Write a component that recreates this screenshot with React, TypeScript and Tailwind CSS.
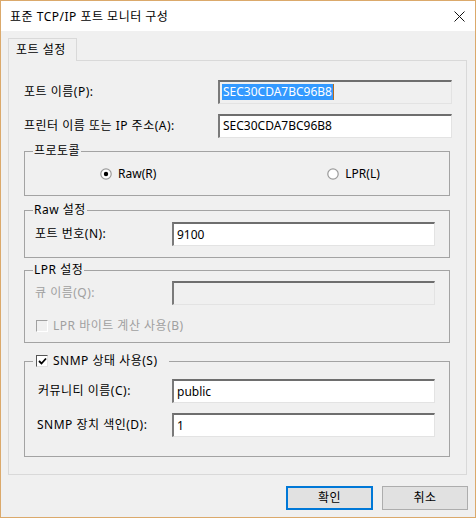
import React from "react";

const font = "font-['Noto_Sans','Noto_Sans_CJK_KR',sans-serif]";
const label = "text-[12px] leading-[16px] tracking-[0.5px]";

function TextBox({
  value,
  width,
  disabled = false,
  selected = false,
}: {
  value?: string;
  width: string;
  disabled?: boolean;
  selected?: boolean;
}) {
  return (
    <div
      className={`${width} h-[24px] flex items-center pl-[2px] border-t-2 border-l-2 border-r border-b border-t-[#6e6e6e] border-l-[#7a7a7a] border-r-[#e3e3e3] border-b-[#e3e3e3] ${
        disabled || selected ? "bg-[#f0f0f0]" : "bg-white"
      }`}
    >
      {value && (
        <span
          className={`text-[12px] leading-[16px] px-[1px] ${
            selected ? "bg-[#3399ff] text-white border-r border-[#b36b1f]" : "text-black"
          }`}
        >
          {value}
        </span>
      )}
    </div>
  );
}

function Radio({ checked }: { checked?: boolean }) {
  return (
    <svg width="12" height="12" viewBox="0 0 12 12">
      <circle cx="6" cy="6" r="5.2" fill="#fff" stroke="#9a9a9a" strokeWidth="1.2" />
      {checked && <circle cx="6" cy="6" r="2.2" fill="#000" />}
    </svg>
  );
}

function Check({ checked, disabled }: { checked?: boolean; disabled?: boolean }) {
  return (
    <div
      className={`w-[12px] h-[12px] flex items-center justify-center border-t border-l border-r border-b ${
        disabled
          ? "bg-[#f0f0f0] border-t-[#a0a0a0] border-l-[#a0a0a0] border-r-white border-b-white"
          : "bg-white border-t-[#555] border-l-[#555] border-r-[#e3e3e3] border-b-[#e3e3e3]"
      }`}
    >
      {checked && (
        <svg width="9" height="8" viewBox="0 0 9 8">
          <polyline points="1,4 3.5,6.5 8,1.5" fill="none" stroke="#000" strokeWidth="1.8" />
        </svg>
      )}
    </div>
  );
}

function Group({
  legend,
  height,
  className = "",
  children,
}: {
  legend: React.ReactNode;
  height: string;
  className?: string;
  children?: React.ReactNode;
}) {
  return (
    <div className={`relative ml-[15px] w-[426px] ${height} border border-[#a3a3a3] ${className}`}>
      <div className={`absolute -top-[9px] left-[8px] px-[1px] bg-[#f0f0f0] flex items-center ${label} text-black`}>
        {legend}
      </div>
      {children}
    </div>
  );
}

export default function App() {
  return (
    <div className={`${font} w-[476px] h-[518px] border border-[#dba96b] bg-[#f0f0f0] flex flex-col text-black`}>
      {/* title bar */}
      <div className="h-[30px] bg-white flex items-center justify-between pl-[9px] pr-[9px]">
        <span className={`${label} mt-[1px]`}>표준 TCP/IP 포트 모니터 구성</span>
        <svg width="11" height="11" viewBox="0 0 11 11" className="mr-[1px]">
          <path d="M0.5 0.5 L10.5 10.5 M10.5 0.5 L0.5 10.5" stroke="#111" strokeWidth="1" />
        </svg>
      </div>

      <div className="px-[7px] pt-[7px]">
        {/* tab header */}
        <div className="relative z-10 w-[69px] h-[23px] border border-b-0 border-[#d9d9d9] bg-[#f0f0f0] flex items-center pl-[7px]">
          <span className={label}>포트 설정</span>
        </div>

        {/* tab panel */}
        <div className="-mt-px w-[459px] h-[415px] border border-[#d9d9d9] flex flex-col">
          <div className="mt-[18px] h-[25px] flex items-center justify-between pl-[15px] pr-[14px]">
            <span className={label}>포트 이름(P):</span>
            <TextBox width="w-[234px]" value="SEC30CDA7BC96B8" selected />
          </div>
          <div className="mt-[9px] h-[25px] flex items-center justify-between pl-[15px] pr-[14px]">
            <span className={label}>프린터 이름 또는 IP 주소(A):</span>
            <TextBox width="w-[234px]" value="SEC30CDA7BC96B8" />
          </div>

          <Group legend="프로토콜" height="h-[45px]" className="mt-[13px]">
            <div className="h-full flex items-center">
              <div className="ml-[75px] flex items-center gap-[6px]">
                <Radio checked />
                <span className="text-[12px] leading-[16px]">Raw(R)</span>
              </div>
              <div className="ml-[171px] flex items-center gap-[6px]">
                <Radio />
                <span className="text-[12px] leading-[16px]">LPR(L)</span>
              </div>
            </div>
          </Group>

          <Group legend="Raw 설정" height="h-[48px]" className="mt-[14px]">
            <div className="mt-[11px] pl-[10px] flex items-center">
              <span className={`w-[137px] ${label}`}>포트 번호(N):</span>
              <TextBox width="w-[263px]" value="9100" />
            </div>
          </Group>

          <Group legend="LPR 설정" height="h-[73px]" className="mt-[12px]">
            <div className="mt-[10px] pl-[10px] flex items-center">
              <span className={`w-[137px] ${label} text-[#a0a0a0]`}>큐 이름(Q):</span>
              <TextBox width="w-[263px]" disabled />
            </div>
            <div className="mt-[13px] pl-[11px] flex items-center gap-[5px]">
              <Check disabled />
              <span className={`${label} text-[#a0a0a0]`}>LPR 바이트 계산 사용(B)</span>
            </div>
          </Group>

          <Group
            legend={
              <div className="flex items-center gap-[5px] pl-[2px] pr-[10px]">
                <Check checked />
                <span>SNMP 상태 사용(S)</span>
              </div>
            }
            height="h-[96px]"
            className="mt-[18px]"
          >
            <div className="mt-[17px] pl-[13px] flex items-center">
              <span className={`w-[134px] ${label}`}>커뮤니티 이름(C):</span>
              <TextBox width="w-[263px]" value="public" />
            </div>
            <div className="mt-[10px] pl-[12px] flex items-center">
              <span className={`w-[135px] ${label}`}>SNMP 장치 색인(D):</span>
              <TextBox width="w-[263px]" value="1" />
            </div>
          </Group>
        </div>

        {/* buttons */}
        <div className="mt-[11px] flex justify-end gap-[9px]">
          <button className={`w-[87px] h-[24px] border-2 border-[#0078d7] bg-[#e1e1e1] ${label}`}>확인</button>
          <button className={`w-[86px] h-[24px] border border-[#adadad] bg-[#e1e1e1] ${label}`}>취소</button>
        </div>
      </div>
    </div>
  );
}
